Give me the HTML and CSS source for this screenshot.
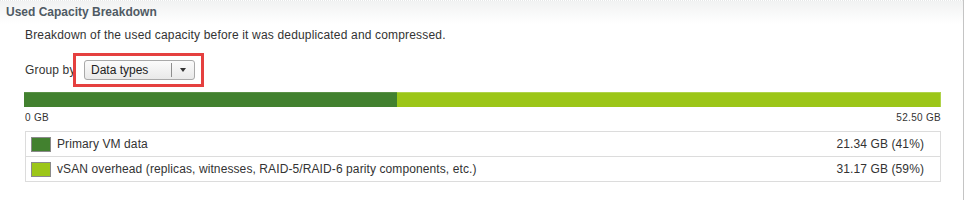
FILE: index.html
```html
<!DOCTYPE html>
<html lang="en">
    <head>
        <meta charset="utf-8">
        <title>Used Capacity Breakdown</title>
        <link rel="stylesheet" href="styles.css">
    </head>
    <body>
        <div class='panel'>
            <div class='panelHeader'>Used Capacity Breakdown</div>

            <div class='panelBody'>
                <div class='desc'>Breakdown of the used capacity before it was deduplicated and compressed.</div>

                <div class='groupRow'>
                    <span class='groupLabel'>Group by</span>
                    <div class='selectBox'>
                        <span class='selectText'>Data types</span>
                        <span class='selectArrow'></span>
                    </div>
                </div>

                <div class='bar'>
                    <div class='barPrimary' style='width:40.65%'></div>
                    <div class='barOverhead'></div>
                </div>

                <div class='scale'>
                    <span>0 GB</span>
                    <span>52.50 GB</span>
                </div>

                <div class='legend'>
                    <div class='legendRow'>
                        <span class='swatch swatchPrimary'></span>
                        <span class='legendName'>Primary VM data</span>
                        <span class='legendValue'>21.34 GB (41%)</span>
                    </div>
                    <div class='legendRow'>
                        <span class='swatch swatchOverhead'></span>
                        <span class='legendName'>vSAN overhead (replicas, witnesses, RAID-5/RAID-6 parity components, etc.)</span>
                        <span class='legendValue'>31.17 GB (59%)</span>
                    </div>
                </div>
            </div>
        </div>
    </body>
</html>
```

FILE: styles.css
```css
body
{
    margin: 0;
    background-color: #ffffff;
    font-family: "Liberation Sans", Arial, sans-serif;
    font-size: 12px;
    color: #333333;
}

.panel
{
    width: 963px;
    height: 200px;
    border-right: 1px solid #c4c4c4;
}

.panelHeader
{
    height: 24px;
    line-height: 23px;
    padding-left: 6px;
    font-weight: bold;
    color: #4f5a64;
    background: linear-gradient(#f1f2f2, #ffffff);
    border-top: 1px dotted #e6e8e8;
    box-sizing: border-box;
}

.panelBody
{
    padding: 0 22px 0 24px;
}

.desc
{
    margin-top: 4px;
    margin-left: 1px;
    line-height: 14px;
    letter-spacing: 0.17px;
}

.groupRow
{
    display: flex;
    align-items: center;
    margin-top: 18px;
    margin-left: 1px;
    height: 20px;
}

.groupLabel
{
    width: 59px;
    letter-spacing: 0.15px;
}

.selectBox
{
    position: relative;
    display: flex;
    align-items: center;
    width: 111px;
    height: 20px;
    box-sizing: border-box;
    border: 1px solid #a9a9a9;
    border-radius: 3px;
    background: linear-gradient(#fbfbfb, #e9e9e9);
}

/* red highlight drawn over the control */
.selectBox::after
{
    content: '';
    position: absolute;
    left: -12px;
    top: -8px;
    width: 125px;
    height: 28px;
    border: 3px solid #e5403f;
}

.selectText
{
    flex: 1;
    padding-left: 6px;
    color: #222222;
}

.selectArrow
{
    width: 22px;
    height: 14px;
    border-left: 1px solid #8e8e8e;
    position: relative;
}

.selectArrow::before
{
    content: '';
    position: absolute;
    left: 8px;
    top: 5px;
    border-left: 3px solid transparent;
    border-right: 3px solid transparent;
    border-top: 4px solid #333333;
}

.bar
{
    display: flex;
    margin-top: 12px;
    height: 15px;
}

.barPrimary
{
    background-color: #42812f;
    border-top: 1px solid #5a9147;
}

.barOverhead
{
    flex: 1;
    background-color: #9cc618;
    border-top: 1px solid #b0d34a;
    border-right: 1px solid #b0d34a;
}

.scale
{
    display: flex;
    justify-content: space-between;
    margin-top: 5px;
    margin-left: 1px;
    font-size: 10px;
    line-height: 12px;
    letter-spacing: 0.3px;
}

.legend
{
    margin-top: 7px;
    margin-left: 1px;
    border: 1px solid #dcdcdc;
    letter-spacing: 0.1px;
}

.legendRow
{
    display: flex;
    align-items: center;
    height: 24px;
    padding: 0 16px 0 5px;
}

.legendRow + .legendRow
{
    border-top: 1px solid #dcdcdc;
}

.swatch
{
    width: 18px;
    height: 13px;
    border: 1px solid #8a8a8a;
    margin-right: 6px;
}

.swatchPrimary
{
    background-color: #42812f;
}

.swatchOverhead
{
    background-color: #9cc618;
}

.legendName
{
    flex: 1;
}
```
